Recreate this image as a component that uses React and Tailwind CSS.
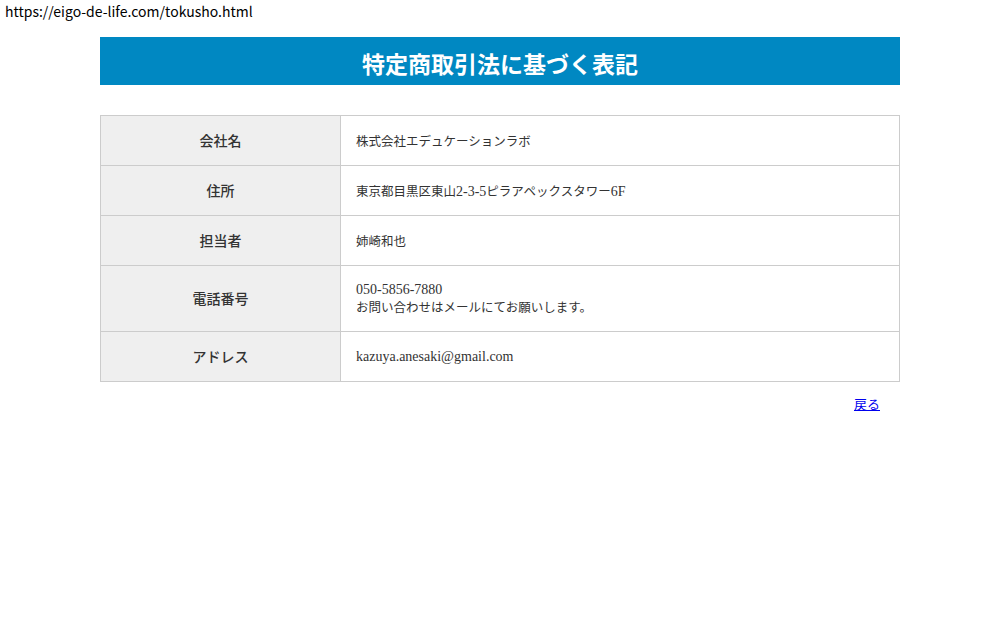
const J = ({ children }) => (
  <span className="text-[12.5px] [font-family:'Noto_Sans_CJK_JP',sans-serif]">{children}</span>
);

const rows = [
  { label: "会社名", value: [<J key="a">株式会社エデュケーションラボ</J>], h: "h-[50px]" },
  {
    label: "住所",
    value: [
      <span key="a">
        <J>東京都目黒区東山</J>2-3-5<J>ピラアペックスタワー</J>6F
      </span>,
    ],
    h: "h-[50px]",
  },
  { label: "担当者", value: [<J key="a">姉崎和也</J>], h: "h-[50px]" },
  {
    label: "電話番号",
    value: [
      <span key="a">050-5856-7880</span>,
      <J key="b">お問い合わせはメールにてお願いします。</J>,
    ],
    h: "h-[66px]",
  },
  { label: "アドレス", value: [<span key="a">kazuya.anesaki@gmail.com</span>], h: "h-[50px]" },
];

export default function App() {
  return (
    <div className="min-h-[620px] w-[1000px] bg-white text-[#333] [font-family:'Noto_Sans_CJK_JP',sans-serif]">
      <p className="pl-[5px] pt-[3px] text-[14px] leading-[16px] text-black">
        https://eigo-de-life.com/tokusho.html
      </p>

      <div className="mx-[100px] mt-[18px]">
        <h1 className="flex h-[48px] items-center justify-center bg-[#0088c2] pt-[4px] text-[23px] font-bold text-white">
          特定商取引法に基づく表記
        </h1>

        <table className="mt-[30px] w-full border-collapse border border-[#cccccc]">
          <tbody>
            {rows.map((row) => (
              <tr key={row.label} className={row.h}>
                <th className="w-[240px] border border-[#cccccc] bg-[#efefef] text-[14px] font-medium text-[#333]">
                  {row.label}
                </th>
                <td className="border border-[#cccccc] pl-[15px] text-[14px] leading-[17px] [font-family:'Liberation_Serif','Noto_Sans_CJK_JP',serif]">
                  {row.value.map((line, i) => (
                    <div key={i}>{line}</div>
                  ))}
                </td>
              </tr>
            ))}
          </tbody>
        </table>

        <div className="mt-[12px] flex justify-end pr-[20px]">
          <a href="#" className="text-[13px] text-[#0000ee] underline">
            戻る
          </a>
        </div>
      </div>
    </div>
  );
}
